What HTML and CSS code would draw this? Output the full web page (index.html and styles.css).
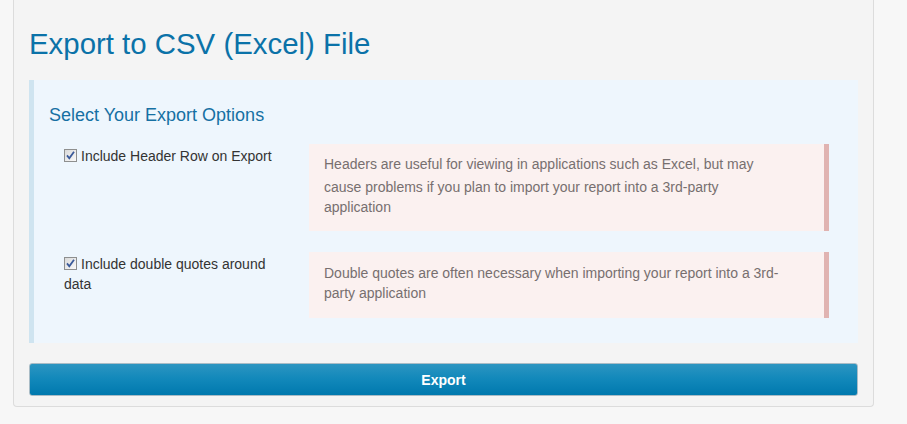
FILE: index.html
```html
<!DOCTYPE html>
<html lang="en">
<head>
<meta charset="utf-8">
<title>Export to CSV (Excel) File</title>
<link rel="stylesheet" href="styles.css">
</head>
<body>
<div class="page">
  <div class="card">
    <h1 class="title">Export to CSV (Excel) File</h1>
    <div class="panel">
      <h3 class="panel-title">Select Your Export Options</h3>
      <div class="option">
        <label class="opt-label"><span class="cb"><svg width="13" height="13" viewBox="0 0 13 13"><defs><linearGradient id="g1" x1="0" y1="0" x2="1" y2="1"><stop offset="0" stop-color="#d8d8d8"/><stop offset="1" stop-color="#fbfbfb"/></linearGradient></defs><rect x="0.5" y="0.5" width="12" height="12" fill="url(#g1)" stroke="#8e8f8f"/><path d="M3 6.4 L5.3 9.2 L10 2.8" fill="none" stroke="#3a5a9a" stroke-width="1.8"/></svg></span>Include Header Row on Export</label>
        <div class="note note-first"><span class="note-line1">Headers are useful for viewing in applications such as Excel, but may</span><span class="note-rest">cause problems if you plan to import your report into a 3rd-party application</span></div>
      </div>
      <div class="option">
        <label class="opt-label"><span class="cb"><svg width="13" height="13" viewBox="0 0 13 13"><defs><linearGradient id="g2" x1="0" y1="0" x2="1" y2="1"><stop offset="0" stop-color="#d8d8d8"/><stop offset="1" stop-color="#fbfbfb"/></linearGradient></defs><rect x="0.5" y="0.5" width="12" height="12" fill="url(#g2)" stroke="#8e8f8f"/><path d="M3 6.4 L5.3 9.2 L10 2.8" fill="none" stroke="#3a5a9a" stroke-width="1.8"/></svg></span>Include double quotes around data</label>
        <div class="note note-second">Double quotes are often necessary when importing your report into a 3rd-party application</div>
      </div>
    </div>
    <button class="export-btn" type="button">Export</button>
  </div>
</div>
</body>
</html>
```

FILE: styles.css
```css
html, body {
  margin: 0;
  padding: 0;
  background: #f7f7f7;
  font-family: "Liberation Sans", Arial, sans-serif;
  font-size: 14px;
  color: #333;
}

.page {
  padding: 0 33px 0 13px;
}

.card {
  background: #f4f4f4;
  border: 1px solid #dcdcdc;
  border-top: 0;
  border-radius: 0 0 4px 4px;
  padding: 27px 15px 10px 15px;
}

.title {
  margin: 0 0 20px 0;
  font-size: 29.4px;
  line-height: 33px;
  font-weight: normal;
  color: #0b72a8;
}

.panel {
  background: #eef6fd;
  border-left: 5px solid #cfe4f0;
  padding: 25px 29px 25px 15px;
}

.panel-title {
  margin: 0 0 19px 0;
  font-size: 18px;
  line-height: 20px;
  font-weight: normal;
  color: #1670a3;
}

.option {
  display: grid;
  grid-template-columns: 260px 1fr;
  align-items: start;
}

.option + .option {
  margin-top: 21px;
}

.opt-label {
  display: block;
  padding: 2px 15px 0 15px;
  line-height: 20px;
  color: #333;
}

.cb {
  display: inline-block;
  width: 13px;
  height: 13px;
  margin-right: 4px;
  vertical-align: -1px;
}

.cb svg {
  display: block;
}

.note {
  background: #fbf1f0;
  border-right: 5px solid #e0b3b1;
  padding: 11px 40px 13px 15px;
  line-height: 20px;
  color: #776f6f;
}

.note-first {
  padding-top: 10px;
  padding-bottom: 14px;
}

.note-second {
  padding-bottom: 15px;
}

.note-line1 {
  display: block;
  margin-bottom: 3px;
}

.note-rest {
  display: block;
}

.export-btn {
  display: block;
  width: 100%;
  height: 33px;
  margin-top: 20px;
  border: 1px solid #a9bcc6;
  border-radius: 3px;
  background: linear-gradient(to bottom, #2c95c1 0%, #1389bb 45%, #0079ae 100%);
  color: #fff;
  font-family: "Liberation Sans", Arial, sans-serif;
  font-size: 14px;
  font-weight: bold;
  cursor: pointer;
}
```
